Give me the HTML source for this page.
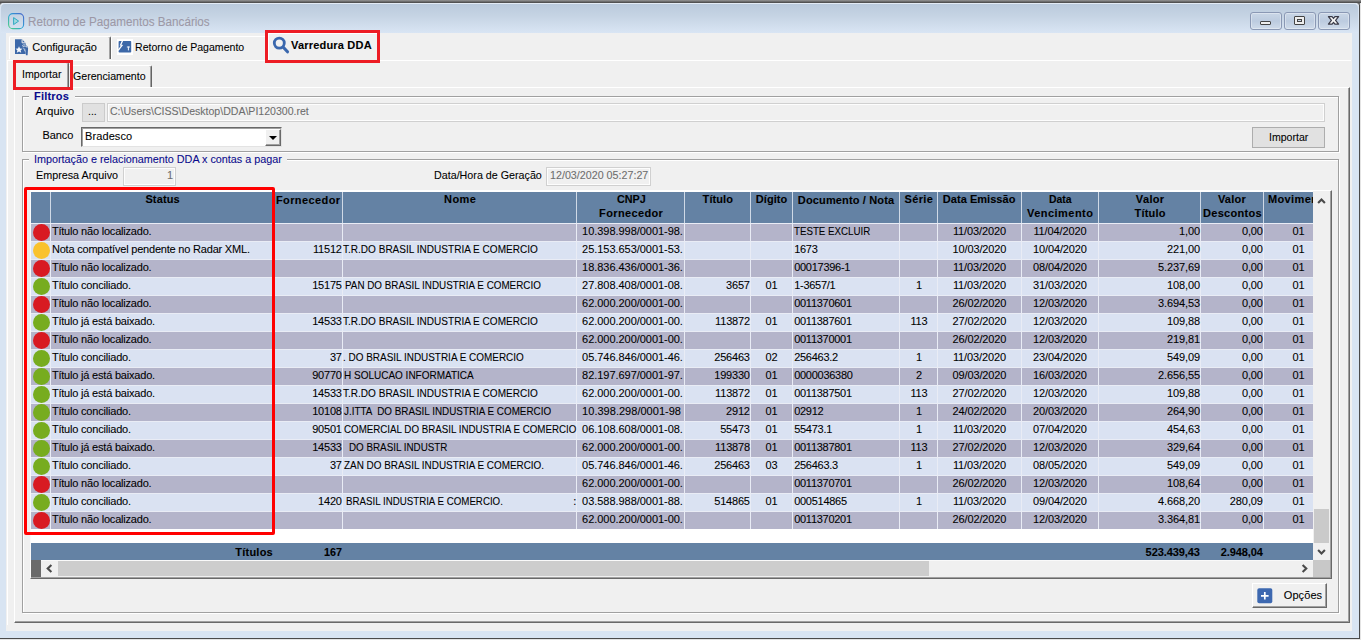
<!DOCTYPE html>
<html><head><meta charset="utf-8"><title>Retorno de Pagamentos Bancários</title>
<style>
html,body{margin:0;padding:0}
body{width:1361px;height:640px;position:relative;overflow:hidden;background:#6e6e6e;font-family:'Liberation Sans', Arial, sans-serif}
.t{position:absolute;white-space:pre;display:block;-webkit-text-stroke:0.08px}
</style></head><body>
<div style="position:absolute;left:0;top:0;width:1361px;height:640px;background:#6e6e6e"></div>
<div style="position:absolute;left:0;top:0;width:1361px;height:3px;background:linear-gradient(#969696,#444)"></div>
<div style="position:absolute;left:0;top:3px;width:1359px;height:635px;background:#d8e4f2;border-radius:4px 4px 0 0;box-shadow:inset 0 1px 0 #eef4fb"></div>
<div style="position:absolute;left:1px;top:3px;width:1357px;height:30px;border-radius:4px 4px 0 0;background:linear-gradient(#b9c9db,#c6d4e4 45%,#d9e5f4);box-shadow:inset 0 1px 0 #e3ebf5"></div>
<div style="position:absolute;left:0;top:638px;width:1361px;height:1px;background:#4a4a4a"></div>
<div style="position:absolute;left:0;top:639px;width:1361px;height:1px;background:#e4e4e4"></div>
<div style="position:absolute;left:1359px;top:5px;width:1px;height:634px;background:#4a4a4a"></div>
<div style="position:absolute;left:1360px;top:3px;width:1px;height:637px;background:#e4e4e4"></div>
<div style="position:absolute;left:6px;top:33px;width:1346px;height:598px;background:#f0f0f0"></div>
<svg style="position:absolute;left:7px;top:12px" width="19" height="19" viewBox="0 0 19 19">
<defs><linearGradient id="g1" x1="1" y1="0" x2="0" y2="1"><stop offset="0" stop-color="#4a63c9"/><stop offset=".5" stop-color="#2aa2d8"/><stop offset="1" stop-color="#4fd07a"/></linearGradient></defs>
<rect x="1.6" y="1.6" width="15" height="15" rx="4.2" fill="none" stroke="url(#g1)" stroke-width="1.1"/>
<path d="M6.6 5.6 L11.6 9.1 L6.6 12.6 Z" fill="#9fd8dc" stroke="#2fa9c4" stroke-width="1" stroke-linejoin="round"/></svg>
<div style="position:absolute;left:1250px;top:12px;width:32px;height:18px;box-sizing:border-box;border:1px solid #8a98b4;border-radius:3px;background:linear-gradient(#c9d6e6,#bccbdf 50%,#cfdbea);box-shadow:inset 0 0 0 1px rgba(255,255,255,.35)"></div>
<div style="position:absolute;left:1284px;top:12px;width:32px;height:18px;box-sizing:border-box;border:1px solid #8a98b4;border-radius:3px;background:linear-gradient(#c9d6e6,#bccbdf 50%,#cfdbea);box-shadow:inset 0 0 0 1px rgba(255,255,255,.35)"></div>
<div style="position:absolute;left:1318px;top:12px;width:32px;height:18px;box-sizing:border-box;border:1px solid #8a98b4;border-radius:3px;background:linear-gradient(#c9d6e6,#bccbdf 50%,#cfdbea);box-shadow:inset 0 0 0 1px rgba(255,255,255,.35)"></div>
<div style="position:absolute;left:1260px;top:21px;width:11px;height:4px;box-sizing:border-box;border:1px solid #444;border-radius:1px;background:#eee"></div>
<div style="position:absolute;left:1294px;top:16px;width:11px;height:9px;box-sizing:border-box;border:1px solid #444;border-radius:1px;background:#eee"></div>
<div style="position:absolute;left:1297px;top:19px;width:5px;height:3px;box-sizing:border-box;border:1px solid #444;background:#c6d3e4"></div>
<svg style="position:absolute;left:1327px;top:15px" width="13" height="11" viewBox="0 0 13 11"><path d="M1.4 1.7 L5.1 1.7 L6.5 3.5 L7.9 1.7 L11.6 1.7 L8.6 5.4 L11.6 9.1 L7.9 9.1 L6.5 7.3 L5.1 9.1 L1.4 9.1 L4.4 5.4 Z" fill="#f4f4f4" stroke="#3a3a46" stroke-width="1.2" stroke-linejoin="round"/></svg>
<div style="position:absolute;left:7px;top:60px;width:1344px;height:1px;background:#fff"></div>
<div style="position:absolute;left:7px;top:60px;width:1px;height:565px;background:#fff"></div>
<div style="position:absolute;left:9px;top:36px;width:102px;height:23px;box-sizing:border-box;border-top:1px solid #fff;border-left:1px solid #fff;border-right:1px solid #646464;box-shadow:inset -1px 0 0 #a3a3a3;border-radius:2px 2px 0 0"></div>
<div style="position:absolute;left:111px;top:36px;width:154px;height:23px;box-sizing:border-box;border-top:1px solid #fff;border-left:1px solid #fff;border-radius:2px 0 0 0"></div>
<div style="position:absolute;left:268px;top:33px;width:110px;height:28px;box-sizing:border-box;border-top:1px solid #fff;border-left:1px solid #fff;background:#f0f0f0"></div>
<div style="position:absolute;left:265px;top:30px;width:115px;height:33px;box-sizing:border-box;border:3px solid #ed1c24"></div>
<svg style="position:absolute;left:15px;top:38.8px" width="14" height="17" viewBox="0 0 14 17">
<path d="M0 0.2 H7 L10.6 3.9 V14.9 H0 Z" fill="#3d68a8"/>
<path d="M9.4 4.6 L12.5 7.4 L13.1 9.6 L12.6 16.2 L10.9 16.2 L10.6 11 L9 6 Z" fill="#3d68a8"/>
<path d="M7.1 0.5 V3.8 H10.4" fill="none" stroke="#f0f0f0" stroke-width="1"/>
<path d="M4 7.2 L5 9.5 L7.5 9.7 L5.6 11.3 L6.2 13.8 L4 12.4 L1.8 13.8 L2.4 11.3 L0.5 9.7 L3 9.5 Z" fill="#f6f8fb"/>
<path d="M7.2 6.6 Q8.8 5.2 10.4 6 M7.6 7.8 Q9 6.8 10.8 7.4 M8.6 8.8 L10.2 12.6 M11.3 6.6 L11.9 8.6" stroke="#dde5f0" stroke-width="0.8" fill="none"/></svg>
<svg style="position:absolute;left:117px;top:39px" width="16" height="16" viewBox="0 0 16 16"><rect width="16" height="16" fill="#fff"/>
<rect x="1.6" y="2" width="12.6" height="11.6" rx="0.8" fill="#3d68a8"/>
<path d="M5.6 1.6 L3.6 6 L5 6.4 L1.2 11.4" stroke="#fff" stroke-width="1.3" fill="none"/>
<path d="M11.4 11.4 V7.6 M9.9 8 H12.9" stroke="#f2f5fa" stroke-width="1" fill="none"/></svg>
<svg style="position:absolute;left:271px;top:35px" width="20" height="20" viewBox="0 0 20 20"><circle cx="8.3" cy="8.1" r="5" fill="none" stroke="#3a67ad" stroke-width="2.8"/><path d="M12.3 12.3 L16.5 16.8" stroke="#3a67ad" stroke-width="3.1" stroke-linecap="round"/></svg>
<div style="position:absolute;left:14px;top:87px;width:1336px;height:536px;box-sizing:border-box;border-top:1px solid #fff;border-left:1px solid #fff;border-right:1px solid #696969;border-bottom:1px solid #696969;box-shadow:inset -1px -1px 0 #a0a0a0"></div>
<div style="position:absolute;left:15px;top:62px;width:54px;height:27px;box-sizing:border-box;border-top:1px solid #fff;border-left:1px solid #fff;border-right:1px solid #646464;box-shadow:inset -1px 0 0 #a3a3a3;border-radius:2px 2px 0 0;background:#f0f0f0"></div>
<div style="position:absolute;left:69px;top:65px;width:83px;height:22px;box-sizing:border-box;border-top:1px solid #fff;border-right:1px solid #646464;box-shadow:inset -1px 0 0 #a3a3a3;border-radius:0 2px 0 0"></div>
<div style="position:absolute;left:13px;top:60px;width:60px;height:30px;box-sizing:border-box;border:3px solid #ed1c24"></div>
<div style="position:absolute;left:22px;top:96px;width:1317px;height:56px;box-sizing:border-box;border:1px solid #a0a0a0;box-shadow:1px 1px 0 #fff, inset 1px 1px 0 #fff"></div>
<div style="position:absolute;left:29px;top:94px;width:46px;height:5px;background:#f0f0f0"></div>
<div style="position:absolute;left:22px;top:159px;width:1317px;height:454px;box-sizing:border-box;border:1px solid #a0a0a0;box-shadow:1px 1px 0 #fff, inset 1px 1px 0 #fff"></div>
<div style="position:absolute;left:29px;top:157px;width:258px;height:5px;background:#f0f0f0"></div>
<div style="position:absolute;left:82px;top:103px;width:23px;height:19px;box-sizing:border-box;border:1px solid #cbcbcb;background:#e1e1e1"></div>
<div style="position:absolute;left:107px;top:103px;width:1218px;height:19px;box-sizing:border-box;border:1px solid #d0d0d0;box-shadow:inset 0 0 0 1px #fdfdfd;background:#f0f0f0"></div>
<div style="position:absolute;left:81px;top:127px;width:201px;height:20px;box-sizing:border-box;border:1px solid #696969;border-right-color:#e3e3e3;border-bottom-color:#e3e3e3;box-shadow:inset 1px 1px 0 #a0a0a0;background:#fff"></div>
<div style="position:absolute;left:265px;top:129px;width:16px;height:17px;box-sizing:border-box;background:#f0f0f0;border:1px solid #fff;border-right-color:#696969;border-bottom-color:#696969;box-shadow:inset -1px -1px 0 #a0a0a0"></div>
<div style="position:absolute;left:269px;top:136px;width:0;height:0;border-left:4px solid transparent;border-right:4px solid transparent;border-top:4px solid #000"></div>
<div style="position:absolute;left:1252px;top:127px;width:73px;height:21px;box-sizing:border-box;border:1px solid #adadad;background:#e1e1e1"></div>
<div style="position:absolute;left:123px;top:167px;width:53px;height:19px;box-sizing:border-box;border:1px solid #d0d0d0;box-shadow:inset 0 0 0 1px #fdfdfd;background:#f0f0f0"></div>
<div style="position:absolute;left:546px;top:167px;width:105px;height:19px;box-sizing:border-box;border:1px solid #d0d0d0;box-shadow:inset 0 0 0 1px #fdfdfd;background:#f0f0f0"></div>
<div style="position:absolute;left:30px;top:190px;width:1302px;height:389px;box-sizing:border-box;border-top:1px solid #fff;border-left:1px solid #fafafa;border-right:1px solid #696969;border-bottom:1px solid #696969;box-shadow:inset -1px -1px 0 #a0a0a0;background:#fff"></div>
<div style="position:absolute;left:31px;top:192px;width:1282px;height:31px;background:#6482a4"></div>
<div style="position:absolute;left:50px;top:192px;width:1px;height:31px;background:#cfd9e6"></div>
<div style="position:absolute;left:274px;top:192px;width:1px;height:31px;background:#cfd9e6"></div>
<div style="position:absolute;left:342px;top:192px;width:1px;height:31px;background:#cfd9e6"></div>
<div style="position:absolute;left:576px;top:192px;width:1px;height:31px;background:#cfd9e6"></div>
<div style="position:absolute;left:684px;top:192px;width:1px;height:31px;background:#cfd9e6"></div>
<div style="position:absolute;left:750px;top:192px;width:1px;height:31px;background:#cfd9e6"></div>
<div style="position:absolute;left:792px;top:192px;width:1px;height:31px;background:#cfd9e6"></div>
<div style="position:absolute;left:899px;top:192px;width:1px;height:31px;background:#cfd9e6"></div>
<div style="position:absolute;left:937px;top:192px;width:1px;height:31px;background:#cfd9e6"></div>
<div style="position:absolute;left:1021px;top:192px;width:1px;height:31px;background:#cfd9e6"></div>
<div style="position:absolute;left:1098px;top:192px;width:1px;height:31px;background:#cfd9e6"></div>
<div style="position:absolute;left:1200px;top:192px;width:1px;height:31px;background:#cfd9e6"></div>
<div style="position:absolute;left:1263px;top:192px;width:1px;height:31px;background:#cfd9e6"></div>
<div style="position:absolute;left:31px;top:223px;width:1282px;height:18px;background:#e9ecf5"></div>
<div style="position:absolute;left:31px;top:224px;width:1282px;height:17px;background:#b4b4ca"></div>
<div style="position:absolute;left:33px;top:224px;width:17px;height:17px;border-radius:50%;background:#d81a22"></div>
<div style="position:absolute;left:31px;top:241px;width:1282px;height:18px;background:#e9ecf5"></div>
<div style="position:absolute;left:31px;top:242px;width:1282px;height:17px;background:#dae2f2"></div>
<div style="position:absolute;left:33px;top:242px;width:17px;height:17px;border-radius:50%;background:#f9c22e"></div>
<div style="position:absolute;left:31px;top:259px;width:1282px;height:18px;background:#e9ecf5"></div>
<div style="position:absolute;left:31px;top:260px;width:1282px;height:17px;background:#b4b4ca"></div>
<div style="position:absolute;left:33px;top:260px;width:17px;height:17px;border-radius:50%;background:#d81a22"></div>
<div style="position:absolute;left:31px;top:277px;width:1282px;height:18px;background:#e9ecf5"></div>
<div style="position:absolute;left:31px;top:278px;width:1282px;height:17px;background:#dae2f2"></div>
<div style="position:absolute;left:33px;top:278px;width:17px;height:17px;border-radius:50%;background:#77ac1f"></div>
<div style="position:absolute;left:31px;top:295px;width:1282px;height:18px;background:#e9ecf5"></div>
<div style="position:absolute;left:31px;top:296px;width:1282px;height:17px;background:#b4b4ca"></div>
<div style="position:absolute;left:33px;top:296px;width:17px;height:17px;border-radius:50%;background:#d81a22"></div>
<div style="position:absolute;left:31px;top:313px;width:1282px;height:18px;background:#e9ecf5"></div>
<div style="position:absolute;left:31px;top:314px;width:1282px;height:17px;background:#dae2f2"></div>
<div style="position:absolute;left:33px;top:314px;width:17px;height:17px;border-radius:50%;background:#77ac1f"></div>
<div style="position:absolute;left:31px;top:331px;width:1282px;height:18px;background:#e9ecf5"></div>
<div style="position:absolute;left:31px;top:332px;width:1282px;height:17px;background:#b4b4ca"></div>
<div style="position:absolute;left:33px;top:332px;width:17px;height:17px;border-radius:50%;background:#d81a22"></div>
<div style="position:absolute;left:31px;top:349px;width:1282px;height:18px;background:#e9ecf5"></div>
<div style="position:absolute;left:31px;top:350px;width:1282px;height:17px;background:#dae2f2"></div>
<div style="position:absolute;left:33px;top:350px;width:17px;height:17px;border-radius:50%;background:#77ac1f"></div>
<div style="position:absolute;left:31px;top:367px;width:1282px;height:18px;background:#e9ecf5"></div>
<div style="position:absolute;left:31px;top:368px;width:1282px;height:17px;background:#b4b4ca"></div>
<div style="position:absolute;left:33px;top:368px;width:17px;height:17px;border-radius:50%;background:#77ac1f"></div>
<div style="position:absolute;left:31px;top:385px;width:1282px;height:18px;background:#e9ecf5"></div>
<div style="position:absolute;left:31px;top:386px;width:1282px;height:17px;background:#dae2f2"></div>
<div style="position:absolute;left:33px;top:386px;width:17px;height:17px;border-radius:50%;background:#77ac1f"></div>
<div style="position:absolute;left:31px;top:403px;width:1282px;height:18px;background:#e9ecf5"></div>
<div style="position:absolute;left:31px;top:404px;width:1282px;height:17px;background:#b4b4ca"></div>
<div style="position:absolute;left:33px;top:404px;width:17px;height:17px;border-radius:50%;background:#77ac1f"></div>
<div style="position:absolute;left:31px;top:421px;width:1282px;height:18px;background:#e9ecf5"></div>
<div style="position:absolute;left:31px;top:422px;width:1282px;height:17px;background:#dae2f2"></div>
<div style="position:absolute;left:33px;top:422px;width:17px;height:17px;border-radius:50%;background:#77ac1f"></div>
<div style="position:absolute;left:31px;top:439px;width:1282px;height:18px;background:#e9ecf5"></div>
<div style="position:absolute;left:31px;top:440px;width:1282px;height:17px;background:#b4b4ca"></div>
<div style="position:absolute;left:33px;top:440px;width:17px;height:17px;border-radius:50%;background:#77ac1f"></div>
<div style="position:absolute;left:31px;top:457px;width:1282px;height:18px;background:#e9ecf5"></div>
<div style="position:absolute;left:31px;top:458px;width:1282px;height:17px;background:#dae2f2"></div>
<div style="position:absolute;left:33px;top:458px;width:17px;height:17px;border-radius:50%;background:#77ac1f"></div>
<div style="position:absolute;left:31px;top:475px;width:1282px;height:18px;background:#e9ecf5"></div>
<div style="position:absolute;left:31px;top:476px;width:1282px;height:17px;background:#b4b4ca"></div>
<div style="position:absolute;left:33px;top:476px;width:17px;height:17px;border-radius:50%;background:#d81a22"></div>
<div style="position:absolute;left:31px;top:493px;width:1282px;height:18px;background:#e9ecf5"></div>
<div style="position:absolute;left:31px;top:494px;width:1282px;height:17px;background:#dae2f2"></div>
<div style="position:absolute;left:33px;top:494px;width:17px;height:17px;border-radius:50%;background:#77ac1f"></div>
<div style="position:absolute;left:31px;top:511px;width:1282px;height:18px;background:#e9ecf5"></div>
<div style="position:absolute;left:31px;top:512px;width:1282px;height:17px;background:#b4b4ca"></div>
<div style="position:absolute;left:33px;top:512px;width:17px;height:17px;border-radius:50%;background:#d81a22"></div>
<div style="position:absolute;left:50px;top:223px;width:1px;height:306px;background:#e9ecf5"></div>
<div style="position:absolute;left:274px;top:223px;width:1px;height:306px;background:#e9ecf5"></div>
<div style="position:absolute;left:342px;top:223px;width:1px;height:306px;background:#e9ecf5"></div>
<div style="position:absolute;left:576px;top:223px;width:1px;height:306px;background:#e9ecf5"></div>
<div style="position:absolute;left:684px;top:223px;width:1px;height:306px;background:#e9ecf5"></div>
<div style="position:absolute;left:750px;top:223px;width:1px;height:306px;background:#e9ecf5"></div>
<div style="position:absolute;left:792px;top:223px;width:1px;height:306px;background:#e9ecf5"></div>
<div style="position:absolute;left:899px;top:223px;width:1px;height:306px;background:#e9ecf5"></div>
<div style="position:absolute;left:937px;top:223px;width:1px;height:306px;background:#e9ecf5"></div>
<div style="position:absolute;left:1021px;top:223px;width:1px;height:306px;background:#e9ecf5"></div>
<div style="position:absolute;left:1098px;top:223px;width:1px;height:306px;background:#e9ecf5"></div>
<div style="position:absolute;left:1200px;top:223px;width:1px;height:306px;background:#e9ecf5"></div>
<div style="position:absolute;left:1263px;top:223px;width:1px;height:306px;background:#e9ecf5"></div>
<div style="position:absolute;left:24px;top:187px;width:251px;height:348px;box-sizing:border-box;border:3px solid #ff0000;border-radius:2px"></div>
<div style="position:absolute;left:31px;top:543px;width:1282px;height:17px;background:#6482a4"></div>
<div style="position:absolute;left:1313px;top:191px;width:17px;height:369px;background:#f0f0f0"></div>
<div style="position:absolute;left:1314px;top:509px;width:15px;height:34px;background:#cacaca"></div>
<svg style="position:absolute;left:1313px;top:192px" width="17" height="17" viewBox="0 0 17 17"><path d="M5.1 11 L8.5 7.6 L11.9 11" fill="none" stroke="#4a4a4a" stroke-width="2.1"/></svg>
<svg style="position:absolute;left:1313px;top:543px" width="17" height="17" viewBox="0 0 17 17"><path d="M5.1 7 L8.5 10.4 L11.9 7" fill="none" stroke="#4a4a4a" stroke-width="2.1"/></svg>
<div style="position:absolute;left:31px;top:560px;width:1282px;height:17px;background:#f0f0f0"></div>
<div style="position:absolute;left:31px;top:560px;width:10px;height:17px;background:#6a6a6a"></div>
<div style="position:absolute;left:41px;top:560px;width:1272px;height:1px;background:#fafafa"></div>
<div style="position:absolute;left:58px;top:561px;width:871px;height:15px;background:#cdcdcd"></div>
<div style="position:absolute;left:1313px;top:560px;width:17px;height:17px;background:#c8c8c8"></div>
<svg style="position:absolute;left:41px;top:560px" width="17" height="17" viewBox="0 0 17 17"><path d="M10.4 4.9 L6.7 8.5 L10.4 12.1" fill="none" stroke="#4a4a4a" stroke-width="2.1"/></svg>
<svg style="position:absolute;left:1296px;top:560px" width="17" height="17" viewBox="0 0 17 17"><path d="M6.6 4.9 L10.3 8.5 L6.6 12.1" fill="none" stroke="#4a4a4a" stroke-width="2.1"/></svg>
<div style="position:absolute;left:1252px;top:583px;width:75px;height:25px;box-sizing:border-box;background:#f0f0f0;border:1px solid #fff;border-right:1px solid #696969;border-bottom:1px solid #696969;box-shadow:inset -1px -1px 0 #a0a0a0"></div>
<svg style="position:absolute;left:1257px;top:588px" width="16" height="16" viewBox="0 0 16 16"><rect x="0.3" y="0.3" width="15" height="15" rx="1.8" fill="#3d68b0"/><path d="M7.8 4 V11.6 M4 7.8 H11.6" stroke="#fff" stroke-width="1.7"/></svg>
<span class="t" style="left:28.20px;top:16px;font-size:12px;line-height:12px;color:#9c98a6;letter-spacing:0.000px;transform-origin:0 0;transform:scaleX(0.9728)">Retorno de Pagamentos Bancários</span>
<span class="t" style="left:32.35px;top:42px;font-size:11px;line-height:11px;color:#000;letter-spacing:-0.081px">Configuração</span>
<span class="t" style="left:134.90px;top:42px;font-size:11px;line-height:11px;color:#000;letter-spacing:0.000px;transform-origin:0 0;transform:scaleX(0.9600)">Retorno de Pagamento</span>
<span class="t" style="left:291.10px;top:40px;font-size:11px;line-height:11px;color:#000;letter-spacing:0.186px;font-weight:bold">Varredura DDA</span>
<span class="t" style="left:21.85px;top:69px;font-size:11px;line-height:11px;color:#000;letter-spacing:0.000px;transform-origin:0 0;transform:scaleX(0.9629)">Importar</span>
<span class="t" style="left:73.35px;top:71px;font-size:11px;line-height:11px;color:#000;letter-spacing:0.000px;transform-origin:0 0;transform:scaleX(0.9658)">Gerenciamento</span>
<span class="t" style="left:34.00px;top:91px;font-size:11px;line-height:11px;color:#0a0a8c;letter-spacing:0.212px;font-weight:bold">Filtros</span>
<span class="t" style="left:33.85px;top:154px;font-size:11px;line-height:11px;color:#0a0a8c;letter-spacing:0.000px;transform-origin:0 0;transform:scaleX(0.9813)">Importação e relacionamento DDA x contas a pagar</span>
<span class="t" style="left:35.85px;top:106px;font-size:11px;line-height:11px;color:#000;letter-spacing:0.167px">Arquivo</span>
<span class="t" style="left:88.10px;top:106px;font-size:11px;line-height:11px;color:#000;letter-spacing:0.000px;transform-origin:0 0;transform:scaleX(0.9595)">...</span>
<span class="t" style="left:109.60px;top:106px;font-size:11px;line-height:11px;color:#6d6d6d;letter-spacing:0.000px;transform-origin:0 0;transform:scaleX(0.9592)">C:\Users\CISS\Desktop\DDA\PI120300.ret</span>
<span class="t" style="left:42.60px;top:130px;font-size:11px;line-height:11px;color:#000;letter-spacing:-0.101px">Banco</span>
<span class="t" style="left:85.10px;top:131px;font-size:11px;line-height:11px;color:#000;letter-spacing:0.081px">Bradesco</span>
<span class="t" style="left:1268.60px;top:132px;font-size:11px;line-height:11px;color:#000;letter-spacing:0.000px;transform-origin:0 0;transform:scaleX(0.9593)">Importar</span>
<span class="t" style="left:35.85px;top:170px;font-size:11px;line-height:11px;color:#000;letter-spacing:0.000px;transform-origin:0 0;transform:scaleX(0.9795)">Empresa Arquivo</span>
<span class="t" style="left:166.88px;top:170px;font-size:11px;line-height:11px;color:#6d6d6d;letter-spacing:0.000px">1</span>
<span class="t" style="left:434.20px;top:170px;font-size:11px;line-height:11px;color:#000;letter-spacing:0.000px;transform-origin:0 0;transform:scaleX(0.9741)">Data/Hora de Geração</span>
<span class="t" style="left:549.60px;top:170px;font-size:11px;line-height:11px;color:#6d6d6d;letter-spacing:0.000px;transform-origin:0 0;transform:scaleX(0.9739)">12/03/2020 05:27:27</span>
<span class="t" style="left:145.40px;top:194px;font-size:11px;line-height:11px;color:#000;letter-spacing:0.135px;font-weight:bold">Status</span>
<span class="t" style="left:275.90px;top:195px;font-size:11px;line-height:11px;color:#000;letter-spacing:0.409px;font-weight:bold">Fornecedor</span>
<span class="t" style="left:444.10px;top:194px;font-size:11px;line-height:11px;color:#000;letter-spacing:0.379px;font-weight:bold">Nome</span>
<span class="t" style="left:616.60px;top:194px;font-size:11px;line-height:11px;color:#000;letter-spacing:0.000px;font-weight:bold;transform-origin:0 0;transform:scaleX(0.9815)">CNPJ</span>
<span class="t" style="left:599.10px;top:208px;font-size:11px;line-height:11px;color:#000;letter-spacing:0.365px;font-weight:bold">Fornecedor</span>
<span class="t" style="left:702.60px;top:194px;font-size:11px;line-height:11px;color:#000;letter-spacing:0.073px;font-weight:bold">Título</span>
<span class="t" style="left:755.85px;top:194px;font-size:11px;line-height:11px;color:#000;letter-spacing:0.026px;font-weight:bold">Dígito</span>
<span class="t" style="left:797.85px;top:195px;font-size:11px;line-height:11px;color:#000;letter-spacing:0.145px;font-weight:bold">Documento / Nota</span>
<span class="t" style="left:904.60px;top:194px;font-size:11px;line-height:11px;color:#000;letter-spacing:0.345px;font-weight:bold">Série</span>
<span class="t" style="left:942.85px;top:194px;font-size:11px;line-height:11px;color:#000;letter-spacing:0.036px;font-weight:bold">Data Emissão</span>
<span class="t" style="left:1049.10px;top:194px;font-size:11px;line-height:11px;color:#000;letter-spacing:0.000px;font-weight:bold;transform-origin:0 0;transform:scaleX(0.9457)">Data</span>
<span class="t" style="left:1027.10px;top:208px;font-size:11px;line-height:11px;color:#000;letter-spacing:0.450px;font-weight:bold">Vencimento</span>
<span class="t" style="left:1135.85px;top:194px;font-size:11px;line-height:11px;color:#000;letter-spacing:0.348px;font-weight:bold">Valor</span>
<span class="t" style="left:1134.60px;top:208px;font-size:11px;line-height:11px;color:#000;letter-spacing:0.173px;font-weight:bold">Título</span>
<span class="t" style="left:1217.90px;top:194px;font-size:11px;line-height:11px;color:#000;letter-spacing:0.223px;font-weight:bold">Valor</span>
<span class="t" style="left:1203.00px;top:208px;font-size:11px;line-height:11px;color:#000;letter-spacing:0.300px;font-weight:bold">Descontos</span>
<span class="t" style="left:1267.90px;top:194px;font-size:11px;line-height:11px;color:#000;letter-spacing:0.380px;font-weight:bold;width:45px;overflow:hidden">Movimento</span>
<span class="t" style="left:51.90px;top:226px;font-size:11px;line-height:11px;color:#000;letter-spacing:-0.200px">Título não localizado.</span>
<span class="t" style="left:582.10px;top:226px;font-size:11px;line-height:11px;color:#000;letter-spacing:-0.041px">10.398.998/0001-98.</span>
<span class="t" style="left:794.20px;top:226px;font-size:11px;line-height:11px;color:#000;letter-spacing:0.000px;transform-origin:0 0;transform:scaleX(0.8841)">TESTE EXCLUIR</span>
<span class="t" style="left:952.91px;top:226px;font-size:11px;line-height:11px;color:#000;letter-spacing:-0.120px">11/03/2020</span>
<span class="t" style="left:1033.41px;top:226px;font-size:11px;line-height:11px;color:#000;letter-spacing:-0.120px">11/04/2020</span>
<span class="t" style="left:1179.08px;top:226px;font-size:11px;line-height:11px;color:#000;letter-spacing:-0.100px">1,00</span>
<span class="t" style="left:1241.88px;top:226px;font-size:11px;line-height:11px;color:#000;letter-spacing:-0.100px">0,00</span>
<span class="t" style="left:1292.42px;top:226px;font-size:11px;line-height:11px;color:#000;letter-spacing:-0.100px">01</span>
<span class="t" style="left:51.90px;top:244px;font-size:11px;line-height:11px;color:#000;letter-spacing:-0.200px">Nota compatível pendente no Radar XML.</span>
<span class="t" style="left:313.02px;top:244px;font-size:11px;line-height:11px;color:#000;letter-spacing:-0.200px">11512</span>
<span class="t" style="left:343.10px;top:244px;font-size:11px;line-height:11px;color:#000;letter-spacing:0.000px;transform-origin:0 0;transform:scaleX(0.9123)">T.R.DO BRASIL INDUSTRIA E COMERCIO</span>
<span class="t" style="left:582.10px;top:244px;font-size:11px;line-height:11px;color:#000;letter-spacing:-0.041px">25.153.653/0001-53.</span>
<span class="t" style="left:794.20px;top:244px;font-size:11px;line-height:11px;color:#000;letter-spacing:-0.280px">1673</span>
<span class="t" style="left:952.51px;top:244px;font-size:11px;line-height:11px;color:#000;letter-spacing:-0.120px">10/03/2020</span>
<span class="t" style="left:1033.01px;top:244px;font-size:11px;line-height:11px;color:#000;letter-spacing:-0.120px">10/04/2020</span>
<span class="t" style="left:1167.04px;top:244px;font-size:11px;line-height:11px;color:#000;letter-spacing:-0.100px">221,00</span>
<span class="t" style="left:1241.88px;top:244px;font-size:11px;line-height:11px;color:#000;letter-spacing:-0.100px">0,00</span>
<span class="t" style="left:1292.42px;top:244px;font-size:11px;line-height:11px;color:#000;letter-spacing:-0.100px">01</span>
<span class="t" style="left:51.90px;top:262px;font-size:11px;line-height:11px;color:#000;letter-spacing:-0.200px">Título não localizado.</span>
<span class="t" style="left:582.10px;top:262px;font-size:11px;line-height:11px;color:#000;letter-spacing:-0.041px">18.836.436/0001-36.</span>
<span class="t" style="left:794.20px;top:262px;font-size:11px;line-height:11px;color:#000;letter-spacing:-0.280px">00017396-1</span>
<span class="t" style="left:952.91px;top:262px;font-size:11px;line-height:11px;color:#000;letter-spacing:-0.120px">11/03/2020</span>
<span class="t" style="left:1033.01px;top:262px;font-size:11px;line-height:11px;color:#000;letter-spacing:-0.120px">08/04/2020</span>
<span class="t" style="left:1158.07px;top:262px;font-size:11px;line-height:11px;color:#000;letter-spacing:-0.100px">5.237,69</span>
<span class="t" style="left:1241.88px;top:262px;font-size:11px;line-height:11px;color:#000;letter-spacing:-0.100px">0,00</span>
<span class="t" style="left:1292.42px;top:262px;font-size:11px;line-height:11px;color:#000;letter-spacing:-0.100px">01</span>
<span class="t" style="left:51.90px;top:280px;font-size:11px;line-height:11px;color:#000;letter-spacing:-0.200px">Título conciliado.</span>
<span class="t" style="left:312.21px;top:280px;font-size:11px;line-height:11px;color:#000;letter-spacing:-0.200px">15175</span>
<span class="t" style="left:344.60px;top:280px;font-size:11px;line-height:11px;color:#000;letter-spacing:0.000px;transform-origin:0 0;transform:scaleX(0.8948)">PAN DO BRASIL INDUSTRIA E COMERCIO</span>
<span class="t" style="left:582.10px;top:280px;font-size:11px;line-height:11px;color:#000;letter-spacing:-0.041px">27.808.408/0001-08.</span>
<span class="t" style="left:726.12px;top:280px;font-size:11px;line-height:11px;color:#000;letter-spacing:-0.200px">3657</span>
<span class="t" style="left:765.42px;top:280px;font-size:11px;line-height:11px;color:#000;letter-spacing:-0.100px">01</span>
<span class="t" style="left:794.20px;top:280px;font-size:11px;line-height:11px;color:#000;letter-spacing:-0.280px">1-3657/1</span>
<span class="t" style="left:915.94px;top:280px;font-size:11px;line-height:11px;color:#000;letter-spacing:-0.200px">1</span>
<span class="t" style="left:952.91px;top:280px;font-size:11px;line-height:11px;color:#000;letter-spacing:-0.120px">11/03/2020</span>
<span class="t" style="left:1033.01px;top:280px;font-size:11px;line-height:11px;color:#000;letter-spacing:-0.120px">31/03/2020</span>
<span class="t" style="left:1167.04px;top:280px;font-size:11px;line-height:11px;color:#000;letter-spacing:-0.100px">108,00</span>
<span class="t" style="left:1241.88px;top:280px;font-size:11px;line-height:11px;color:#000;letter-spacing:-0.100px">0,00</span>
<span class="t" style="left:1292.42px;top:280px;font-size:11px;line-height:11px;color:#000;letter-spacing:-0.100px">01</span>
<span class="t" style="left:51.90px;top:298px;font-size:11px;line-height:11px;color:#000;letter-spacing:-0.200px">Título não localizado.</span>
<span class="t" style="left:582.10px;top:298px;font-size:11px;line-height:11px;color:#000;letter-spacing:-0.041px">62.000.200/0001-00.</span>
<span class="t" style="left:794.20px;top:298px;font-size:11px;line-height:11px;color:#000;letter-spacing:-0.280px">0011370601</span>
<span class="t" style="left:952.51px;top:298px;font-size:11px;line-height:11px;color:#000;letter-spacing:-0.120px">26/02/2020</span>
<span class="t" style="left:1033.01px;top:298px;font-size:11px;line-height:11px;color:#000;letter-spacing:-0.120px">12/03/2020</span>
<span class="t" style="left:1158.07px;top:298px;font-size:11px;line-height:11px;color:#000;letter-spacing:-0.100px">3.694,53</span>
<span class="t" style="left:1241.88px;top:298px;font-size:11px;line-height:11px;color:#000;letter-spacing:-0.100px">0,00</span>
<span class="t" style="left:1292.42px;top:298px;font-size:11px;line-height:11px;color:#000;letter-spacing:-0.100px">01</span>
<span class="t" style="left:51.90px;top:316px;font-size:11px;line-height:11px;color:#000;letter-spacing:-0.200px">Título já está baixado.</span>
<span class="t" style="left:312.21px;top:316px;font-size:11px;line-height:11px;color:#000;letter-spacing:-0.200px">14533</span>
<span class="t" style="left:343.10px;top:316px;font-size:11px;line-height:11px;color:#000;letter-spacing:0.000px;transform-origin:0 0;transform:scaleX(0.9123)">T.R.DO BRASIL INDUSTRIA E COMERCIO</span>
<span class="t" style="left:582.10px;top:316px;font-size:11px;line-height:11px;color:#000;letter-spacing:-0.041px">62.000.200/0001-00.</span>
<span class="t" style="left:715.11px;top:316px;font-size:11px;line-height:11px;color:#000;letter-spacing:-0.200px">113872</span>
<span class="t" style="left:765.42px;top:316px;font-size:11px;line-height:11px;color:#000;letter-spacing:-0.100px">01</span>
<span class="t" style="left:794.20px;top:316px;font-size:11px;line-height:11px;color:#000;letter-spacing:-0.280px">0011387601</span>
<span class="t" style="left:910.43px;top:316px;font-size:11px;line-height:11px;color:#000;letter-spacing:-0.200px">113</span>
<span class="t" style="left:952.51px;top:316px;font-size:11px;line-height:11px;color:#000;letter-spacing:-0.120px">27/02/2020</span>
<span class="t" style="left:1033.01px;top:316px;font-size:11px;line-height:11px;color:#000;letter-spacing:-0.120px">12/03/2020</span>
<span class="t" style="left:1167.04px;top:316px;font-size:11px;line-height:11px;color:#000;letter-spacing:-0.100px">109,88</span>
<span class="t" style="left:1241.88px;top:316px;font-size:11px;line-height:11px;color:#000;letter-spacing:-0.100px">0,00</span>
<span class="t" style="left:1292.42px;top:316px;font-size:11px;line-height:11px;color:#000;letter-spacing:-0.100px">01</span>
<span class="t" style="left:51.90px;top:334px;font-size:11px;line-height:11px;color:#000;letter-spacing:-0.200px">Título não localizado.</span>
<span class="t" style="left:582.10px;top:334px;font-size:11px;line-height:11px;color:#000;letter-spacing:-0.041px">62.000.200/0001-00.</span>
<span class="t" style="left:794.20px;top:334px;font-size:11px;line-height:11px;color:#000;letter-spacing:-0.280px">0011370001</span>
<span class="t" style="left:952.51px;top:334px;font-size:11px;line-height:11px;color:#000;letter-spacing:-0.120px">26/02/2020</span>
<span class="t" style="left:1033.01px;top:334px;font-size:11px;line-height:11px;color:#000;letter-spacing:-0.120px">12/03/2020</span>
<span class="t" style="left:1167.04px;top:334px;font-size:11px;line-height:11px;color:#000;letter-spacing:-0.100px">219,81</span>
<span class="t" style="left:1241.88px;top:334px;font-size:11px;line-height:11px;color:#000;letter-spacing:-0.100px">0,00</span>
<span class="t" style="left:1292.42px;top:334px;font-size:11px;line-height:11px;color:#000;letter-spacing:-0.100px">01</span>
<span class="t" style="left:51.90px;top:352px;font-size:11px;line-height:11px;color:#000;letter-spacing:-0.200px">Título conciliado.</span>
<span class="t" style="left:329.95px;top:352px;font-size:11px;line-height:11px;color:#000;letter-spacing:-0.200px">37</span>
<span class="t" style="left:343.00px;top:352px;font-size:11px;line-height:11px;color:#000;letter-spacing:0.000px;transform-origin:0 0;transform:scaleX(0.9036)">. DO BRASIL INDUSTRIA E COMERCIO</span>
<span class="t" style="left:582.10px;top:352px;font-size:11px;line-height:11px;color:#000;letter-spacing:-0.041px">05.746.846/0001-46.</span>
<span class="t" style="left:714.28px;top:352px;font-size:11px;line-height:11px;color:#000;letter-spacing:-0.200px">256463</span>
<span class="t" style="left:765.42px;top:352px;font-size:11px;line-height:11px;color:#000;letter-spacing:-0.100px">02</span>
<span class="t" style="left:794.20px;top:352px;font-size:11px;line-height:11px;color:#000;letter-spacing:-0.280px">256463.2</span>
<span class="t" style="left:915.94px;top:352px;font-size:11px;line-height:11px;color:#000;letter-spacing:-0.200px">1</span>
<span class="t" style="left:952.91px;top:352px;font-size:11px;line-height:11px;color:#000;letter-spacing:-0.120px">11/03/2020</span>
<span class="t" style="left:1033.01px;top:352px;font-size:11px;line-height:11px;color:#000;letter-spacing:-0.120px">23/04/2020</span>
<span class="t" style="left:1167.04px;top:352px;font-size:11px;line-height:11px;color:#000;letter-spacing:-0.100px">549,09</span>
<span class="t" style="left:1241.88px;top:352px;font-size:11px;line-height:11px;color:#000;letter-spacing:-0.100px">0,00</span>
<span class="t" style="left:1292.42px;top:352px;font-size:11px;line-height:11px;color:#000;letter-spacing:-0.100px">01</span>
<span class="t" style="left:51.90px;top:370px;font-size:11px;line-height:11px;color:#000;letter-spacing:-0.200px">Título já está baixado.</span>
<span class="t" style="left:312.21px;top:370px;font-size:11px;line-height:11px;color:#000;letter-spacing:-0.200px">90770</span>
<span class="t" style="left:344.30px;top:370px;font-size:11px;line-height:11px;color:#000;letter-spacing:0.000px;transform-origin:0 0;transform:scaleX(0.9082)">H SOLUCAO INFORMATICA</span>
<span class="t" style="left:582.10px;top:370px;font-size:11px;line-height:11px;color:#000;letter-spacing:-0.041px">82.197.697/0001-97.</span>
<span class="t" style="left:714.28px;top:370px;font-size:11px;line-height:11px;color:#000;letter-spacing:-0.200px">199330</span>
<span class="t" style="left:765.42px;top:370px;font-size:11px;line-height:11px;color:#000;letter-spacing:-0.100px">01</span>
<span class="t" style="left:794.20px;top:370px;font-size:11px;line-height:11px;color:#000;letter-spacing:-0.280px">0000036380</span>
<span class="t" style="left:915.94px;top:370px;font-size:11px;line-height:11px;color:#000;letter-spacing:-0.200px">2</span>
<span class="t" style="left:952.51px;top:370px;font-size:11px;line-height:11px;color:#000;letter-spacing:-0.120px">09/03/2020</span>
<span class="t" style="left:1033.01px;top:370px;font-size:11px;line-height:11px;color:#000;letter-spacing:-0.120px">16/03/2020</span>
<span class="t" style="left:1158.07px;top:370px;font-size:11px;line-height:11px;color:#000;letter-spacing:-0.100px">2.656,55</span>
<span class="t" style="left:1241.88px;top:370px;font-size:11px;line-height:11px;color:#000;letter-spacing:-0.100px">0,00</span>
<span class="t" style="left:1292.42px;top:370px;font-size:11px;line-height:11px;color:#000;letter-spacing:-0.100px">01</span>
<span class="t" style="left:51.90px;top:388px;font-size:11px;line-height:11px;color:#000;letter-spacing:-0.200px">Título já está baixado.</span>
<span class="t" style="left:312.21px;top:388px;font-size:11px;line-height:11px;color:#000;letter-spacing:-0.200px">14533</span>
<span class="t" style="left:343.10px;top:388px;font-size:11px;line-height:11px;color:#000;letter-spacing:0.000px;transform-origin:0 0;transform:scaleX(0.9123)">T.R.DO BRASIL INDUSTRIA E COMERCIO</span>
<span class="t" style="left:582.10px;top:388px;font-size:11px;line-height:11px;color:#000;letter-spacing:-0.041px">62.000.200/0001-00.</span>
<span class="t" style="left:715.11px;top:388px;font-size:11px;line-height:11px;color:#000;letter-spacing:-0.200px">113872</span>
<span class="t" style="left:765.42px;top:388px;font-size:11px;line-height:11px;color:#000;letter-spacing:-0.100px">01</span>
<span class="t" style="left:794.20px;top:388px;font-size:11px;line-height:11px;color:#000;letter-spacing:-0.280px">0011387501</span>
<span class="t" style="left:910.43px;top:388px;font-size:11px;line-height:11px;color:#000;letter-spacing:-0.200px">113</span>
<span class="t" style="left:952.51px;top:388px;font-size:11px;line-height:11px;color:#000;letter-spacing:-0.120px">27/02/2020</span>
<span class="t" style="left:1033.01px;top:388px;font-size:11px;line-height:11px;color:#000;letter-spacing:-0.120px">12/03/2020</span>
<span class="t" style="left:1167.04px;top:388px;font-size:11px;line-height:11px;color:#000;letter-spacing:-0.100px">109,88</span>
<span class="t" style="left:1241.88px;top:388px;font-size:11px;line-height:11px;color:#000;letter-spacing:-0.100px">0,00</span>
<span class="t" style="left:1292.42px;top:388px;font-size:11px;line-height:11px;color:#000;letter-spacing:-0.100px">01</span>
<span class="t" style="left:51.90px;top:406px;font-size:11px;line-height:11px;color:#000;letter-spacing:-0.200px">Título conciliado.</span>
<span class="t" style="left:312.21px;top:406px;font-size:11px;line-height:11px;color:#000;letter-spacing:-0.200px">10108</span>
<span class="t" style="left:344.30px;top:406px;font-size:11px;line-height:11px;color:#000;letter-spacing:0.000px;transform-origin:0 0;transform:scaleX(0.8964)">J.ITTA  DO BRASIL INDUSTRIA E COMERCIO</span>
<span class="t" style="left:582.10px;top:406px;font-size:11px;line-height:11px;color:#000;letter-spacing:0.024px">10.398.298/0001-98</span>
<span class="t" style="left:726.12px;top:406px;font-size:11px;line-height:11px;color:#000;letter-spacing:-0.200px">2912</span>
<span class="t" style="left:765.42px;top:406px;font-size:11px;line-height:11px;color:#000;letter-spacing:-0.100px">01</span>
<span class="t" style="left:794.20px;top:406px;font-size:11px;line-height:11px;color:#000;letter-spacing:-0.280px">02912</span>
<span class="t" style="left:915.94px;top:406px;font-size:11px;line-height:11px;color:#000;letter-spacing:-0.200px">1</span>
<span class="t" style="left:952.51px;top:406px;font-size:11px;line-height:11px;color:#000;letter-spacing:-0.120px">24/02/2020</span>
<span class="t" style="left:1033.01px;top:406px;font-size:11px;line-height:11px;color:#000;letter-spacing:-0.120px">20/03/2020</span>
<span class="t" style="left:1167.04px;top:406px;font-size:11px;line-height:11px;color:#000;letter-spacing:-0.100px">264,90</span>
<span class="t" style="left:1241.88px;top:406px;font-size:11px;line-height:11px;color:#000;letter-spacing:-0.100px">0,00</span>
<span class="t" style="left:1292.42px;top:406px;font-size:11px;line-height:11px;color:#000;letter-spacing:-0.100px">01</span>
<span class="t" style="left:51.90px;top:424px;font-size:11px;line-height:11px;color:#000;letter-spacing:-0.200px">Título conciliado.</span>
<span class="t" style="left:312.21px;top:424px;font-size:11px;line-height:11px;color:#000;letter-spacing:-0.200px">90501</span>
<span class="t" style="left:344.30px;top:424px;font-size:11px;line-height:11px;color:#000;letter-spacing:0.000px;transform-origin:0 0;transform:scaleX(0.8870)">COMERCIAL DO BRASIL INDUSTRIA E COMERCIO</span>
<span class="t" style="left:582.10px;top:424px;font-size:11px;line-height:11px;color:#000;letter-spacing:-0.041px">06.108.608/0001-08.</span>
<span class="t" style="left:720.21px;top:424px;font-size:11px;line-height:11px;color:#000;letter-spacing:-0.200px">55473</span>
<span class="t" style="left:765.42px;top:424px;font-size:11px;line-height:11px;color:#000;letter-spacing:-0.100px">01</span>
<span class="t" style="left:794.20px;top:424px;font-size:11px;line-height:11px;color:#000;letter-spacing:-0.280px">55473.1</span>
<span class="t" style="left:915.94px;top:424px;font-size:11px;line-height:11px;color:#000;letter-spacing:-0.200px">1</span>
<span class="t" style="left:952.91px;top:424px;font-size:11px;line-height:11px;color:#000;letter-spacing:-0.120px">11/03/2020</span>
<span class="t" style="left:1033.01px;top:424px;font-size:11px;line-height:11px;color:#000;letter-spacing:-0.120px">07/04/2020</span>
<span class="t" style="left:1167.04px;top:424px;font-size:11px;line-height:11px;color:#000;letter-spacing:-0.100px">454,63</span>
<span class="t" style="left:1241.88px;top:424px;font-size:11px;line-height:11px;color:#000;letter-spacing:-0.100px">0,00</span>
<span class="t" style="left:1292.42px;top:424px;font-size:11px;line-height:11px;color:#000;letter-spacing:-0.100px">01</span>
<span class="t" style="left:51.90px;top:442px;font-size:11px;line-height:11px;color:#000;letter-spacing:-0.200px">Título já está baixado.</span>
<span class="t" style="left:312.21px;top:442px;font-size:11px;line-height:11px;color:#000;letter-spacing:-0.200px">14533</span>
<span class="t" style="left:349.40px;top:442px;font-size:11px;line-height:11px;color:#000;letter-spacing:0.000px;transform-origin:0 0;transform:scaleX(0.8926)">DO BRASIL INDUSTR</span>
<span class="t" style="left:582.10px;top:442px;font-size:11px;line-height:11px;color:#000;letter-spacing:-0.041px">62.000.200/0001-00.</span>
<span class="t" style="left:715.11px;top:442px;font-size:11px;line-height:11px;color:#000;letter-spacing:-0.200px">113878</span>
<span class="t" style="left:765.42px;top:442px;font-size:11px;line-height:11px;color:#000;letter-spacing:-0.100px">01</span>
<span class="t" style="left:794.20px;top:442px;font-size:11px;line-height:11px;color:#000;letter-spacing:-0.280px">0011387801</span>
<span class="t" style="left:910.43px;top:442px;font-size:11px;line-height:11px;color:#000;letter-spacing:-0.200px">113</span>
<span class="t" style="left:952.51px;top:442px;font-size:11px;line-height:11px;color:#000;letter-spacing:-0.120px">27/02/2020</span>
<span class="t" style="left:1033.01px;top:442px;font-size:11px;line-height:11px;color:#000;letter-spacing:-0.120px">12/03/2020</span>
<span class="t" style="left:1167.04px;top:442px;font-size:11px;line-height:11px;color:#000;letter-spacing:-0.100px">329,64</span>
<span class="t" style="left:1241.88px;top:442px;font-size:11px;line-height:11px;color:#000;letter-spacing:-0.100px">0,00</span>
<span class="t" style="left:1292.42px;top:442px;font-size:11px;line-height:11px;color:#000;letter-spacing:-0.100px">01</span>
<span class="t" style="left:51.90px;top:460px;font-size:11px;line-height:11px;color:#000;letter-spacing:-0.200px">Título conciliado.</span>
<span class="t" style="left:329.95px;top:460px;font-size:11px;line-height:11px;color:#000;letter-spacing:-0.200px">37</span>
<span class="t" style="left:344.30px;top:460px;font-size:11px;line-height:11px;color:#000;letter-spacing:0.000px;transform-origin:0 0;transform:scaleX(0.9010)">ZAN DO BRASIL INDUSTRIA E COMERCIO.</span>
<span class="t" style="left:582.10px;top:460px;font-size:11px;line-height:11px;color:#000;letter-spacing:-0.041px">05.746.846/0001-46.</span>
<span class="t" style="left:714.28px;top:460px;font-size:11px;line-height:11px;color:#000;letter-spacing:-0.200px">256463</span>
<span class="t" style="left:765.42px;top:460px;font-size:11px;line-height:11px;color:#000;letter-spacing:-0.100px">03</span>
<span class="t" style="left:794.20px;top:460px;font-size:11px;line-height:11px;color:#000;letter-spacing:-0.280px">256463.3</span>
<span class="t" style="left:915.94px;top:460px;font-size:11px;line-height:11px;color:#000;letter-spacing:-0.200px">1</span>
<span class="t" style="left:952.91px;top:460px;font-size:11px;line-height:11px;color:#000;letter-spacing:-0.120px">11/03/2020</span>
<span class="t" style="left:1033.01px;top:460px;font-size:11px;line-height:11px;color:#000;letter-spacing:-0.120px">08/05/2020</span>
<span class="t" style="left:1167.04px;top:460px;font-size:11px;line-height:11px;color:#000;letter-spacing:-0.100px">549,09</span>
<span class="t" style="left:1241.88px;top:460px;font-size:11px;line-height:11px;color:#000;letter-spacing:-0.100px">0,00</span>
<span class="t" style="left:1292.42px;top:460px;font-size:11px;line-height:11px;color:#000;letter-spacing:-0.100px">01</span>
<span class="t" style="left:51.90px;top:478px;font-size:11px;line-height:11px;color:#000;letter-spacing:-0.200px">Título não localizado.</span>
<span class="t" style="left:582.10px;top:478px;font-size:11px;line-height:11px;color:#000;letter-spacing:-0.041px">62.000.200/0001-00.</span>
<span class="t" style="left:794.20px;top:478px;font-size:11px;line-height:11px;color:#000;letter-spacing:-0.280px">0011370701</span>
<span class="t" style="left:952.51px;top:478px;font-size:11px;line-height:11px;color:#000;letter-spacing:-0.120px">26/02/2020</span>
<span class="t" style="left:1033.01px;top:478px;font-size:11px;line-height:11px;color:#000;letter-spacing:-0.120px">12/03/2020</span>
<span class="t" style="left:1167.04px;top:478px;font-size:11px;line-height:11px;color:#000;letter-spacing:-0.100px">108,64</span>
<span class="t" style="left:1241.88px;top:478px;font-size:11px;line-height:11px;color:#000;letter-spacing:-0.100px">0,00</span>
<span class="t" style="left:1292.42px;top:478px;font-size:11px;line-height:11px;color:#000;letter-spacing:-0.100px">01</span>
<span class="t" style="left:51.90px;top:496px;font-size:11px;line-height:11px;color:#000;letter-spacing:-0.200px">Título conciliado.</span>
<span class="t" style="left:318.12px;top:496px;font-size:11px;line-height:11px;color:#000;letter-spacing:-0.200px">1420</span>
<span class="t" style="left:345.50px;top:496px;font-size:11px;line-height:11px;color:#000;letter-spacing:0.000px;transform-origin:0 0;transform:scaleX(0.8841)">BRASIL INDUSTRIA E COMERCIO.</span>
<span class="t" style="left:573.20px;top:496px;font-size:11px;line-height:11px;color:#000;letter-spacing:0.000px;width:2.6px;overflow:hidden">:</span>
<span class="t" style="left:582.10px;top:496px;font-size:11px;line-height:11px;color:#000;letter-spacing:-0.041px">03.588.988/0001-88.</span>
<span class="t" style="left:714.28px;top:496px;font-size:11px;line-height:11px;color:#000;letter-spacing:-0.200px">514865</span>
<span class="t" style="left:765.42px;top:496px;font-size:11px;line-height:11px;color:#000;letter-spacing:-0.100px">01</span>
<span class="t" style="left:794.20px;top:496px;font-size:11px;line-height:11px;color:#000;letter-spacing:-0.280px">000514865</span>
<span class="t" style="left:915.94px;top:496px;font-size:11px;line-height:11px;color:#000;letter-spacing:-0.200px">1</span>
<span class="t" style="left:952.91px;top:496px;font-size:11px;line-height:11px;color:#000;letter-spacing:-0.120px">11/03/2020</span>
<span class="t" style="left:1033.01px;top:496px;font-size:11px;line-height:11px;color:#000;letter-spacing:-0.120px">09/04/2020</span>
<span class="t" style="left:1158.07px;top:496px;font-size:11px;line-height:11px;color:#000;letter-spacing:-0.100px">4.668,20</span>
<span class="t" style="left:1229.84px;top:496px;font-size:11px;line-height:11px;color:#000;letter-spacing:-0.100px">280,09</span>
<span class="t" style="left:1292.42px;top:496px;font-size:11px;line-height:11px;color:#000;letter-spacing:-0.100px">01</span>
<span class="t" style="left:51.90px;top:514px;font-size:11px;line-height:11px;color:#000;letter-spacing:-0.200px">Título não localizado.</span>
<span class="t" style="left:582.10px;top:514px;font-size:11px;line-height:11px;color:#000;letter-spacing:-0.041px">62.000.200/0001-00.</span>
<span class="t" style="left:794.20px;top:514px;font-size:11px;line-height:11px;color:#000;letter-spacing:-0.280px">0011370201</span>
<span class="t" style="left:952.51px;top:514px;font-size:11px;line-height:11px;color:#000;letter-spacing:-0.120px">26/02/2020</span>
<span class="t" style="left:1033.01px;top:514px;font-size:11px;line-height:11px;color:#000;letter-spacing:-0.120px">12/03/2020</span>
<span class="t" style="left:1158.07px;top:514px;font-size:11px;line-height:11px;color:#000;letter-spacing:-0.100px">3.364,81</span>
<span class="t" style="left:1241.88px;top:514px;font-size:11px;line-height:11px;color:#000;letter-spacing:-0.100px">0,00</span>
<span class="t" style="left:1292.42px;top:514px;font-size:11px;line-height:11px;color:#000;letter-spacing:-0.100px">01</span>
<span class="t" style="left:235.30px;top:547px;font-size:11px;line-height:11px;color:#000;letter-spacing:0.223px;font-weight:bold">Títulos</span>
<span class="t" style="left:323.90px;top:547px;font-size:11px;line-height:11px;color:#000;letter-spacing:0.000px;font-weight:bold;transform-origin:0 0;transform:scaleX(0.9804)">167</span>
<span class="t" style="left:1145.60px;top:547px;font-size:11px;line-height:11px;color:#000;letter-spacing:-0.074px;font-weight:bold">523.439,43</span>
<span class="t" style="left:1220.80px;top:547px;font-size:11px;line-height:11px;color:#000;letter-spacing:-0.090px;font-weight:bold">2.948,04</span>
<span class="t" style="left:1283.80px;top:590px;font-size:11px;line-height:11px;color:#000;letter-spacing:0.076px">Opções</span>
</body></html>
